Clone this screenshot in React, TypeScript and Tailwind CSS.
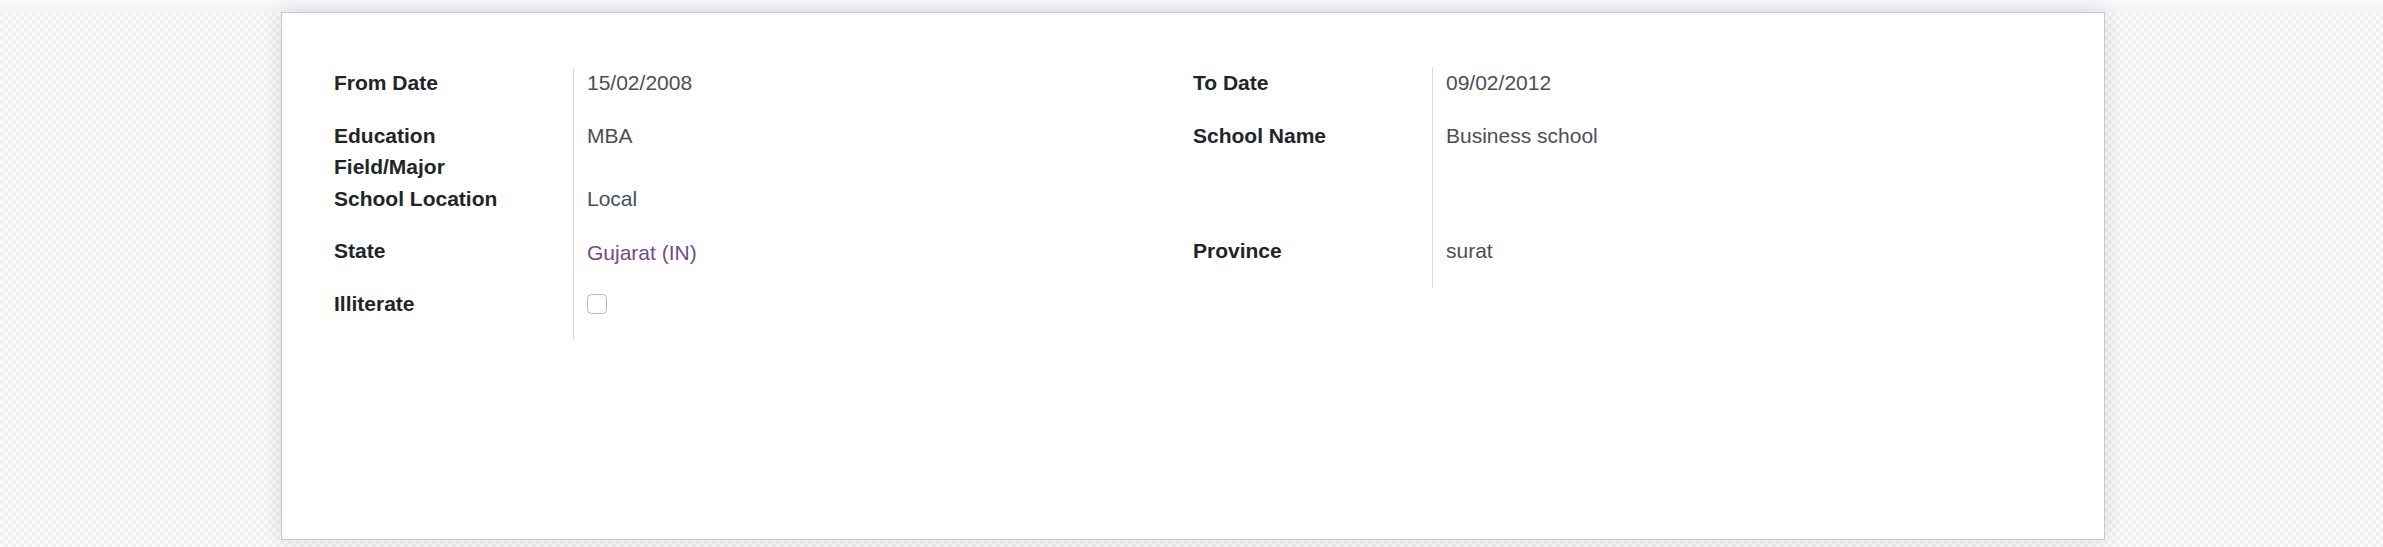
import React from 'react';

type Row = {
  label: React.ReactNode;
  value?: React.ReactNode;
  pad?: string;
};

const leftRows: Row[] = [
  { label: 'From Date', value: '15/02/2008', pad: 'pb-[21px]' },
  {
    label: (
      <>
        Education
        <br />
        Field/Major
      </>
    ),
    value: 'MBA',
    pad: 'pb-0',
  },
  { label: 'School Location', value: 'Local', pad: 'pb-[21px]' },
  {
    label: 'State',
    value: <span className="relative top-[2px] text-[#6e4a90]">Gujarat (IN)</span>,
    pad: 'pb-[21px]',
  },
  {
    label: 'Illiterate',
    value: (
      <span className="mt-[6.5px] block h-[19.5px] w-[19.5px] rounded-[4.5px] border border-[#adb5bd] bg-white" />
    ),
    pad: 'pb-[21px]',
  },
];

const rightRows: Row[] = [
  { label: 'To Date', value: '09/02/2012', pad: 'pb-[21px]' },
  { label: 'School Name', value: 'Business school', pad: 'pb-[84px]' },
  { label: 'Province', value: 'surat', pad: 'pb-[21px]' },
];

const FieldGroup: React.FC<{ rows: Row[] }> = ({ rows }) => (
  <div className="grid grid-cols-[239px_1fr] content-start">
    {rows.map((row, i) => (
      <React.Fragment key={i}>
        <div className={`font-bold text-[#212529] ${row.pad}`}>{row.label}</div>
        <div className={`border-l-[1.5px] border-[#dadada] pl-[13px] text-[#4a4f55] ${row.pad}`}>
          {row.value}
        </div>
      </React.Fragment>
    ))}
  </div>
);

const App: React.FC = () => {
  return (
    <div
      className="h-[547px] w-[2383px] overflow-hidden bg-[conic-gradient(#f1f1f1_25%,#fbfbfb_0_50%,#f1f1f1_0_75%,#fbfbfb_0)] bg-size-[8px_8px] text-[21px] leading-[31.5px]"
      style={{ fontFamily: '"Liberation Sans", Arial, sans-serif' }}
    >
      {/* top strip */}
      <div className="h-[12px] bg-gradient-to-b from-[#f9f9fb] to-[#f3f4f6]" />

      {/* sheet */}
      <div className="ml-[281px] h-[528px] w-[1824px] border border-[#c9c6d8] bg-white pl-[52px] pr-[52px] pt-[54px] shadow-[0_0_22px_rgba(0,0,0,0.13)]">
        <div className="grid grid-cols-2">
          <FieldGroup rows={leftRows} />
          <FieldGroup rows={rightRows} />
        </div>
      </div>
    </div>
  );
};

export default App;
